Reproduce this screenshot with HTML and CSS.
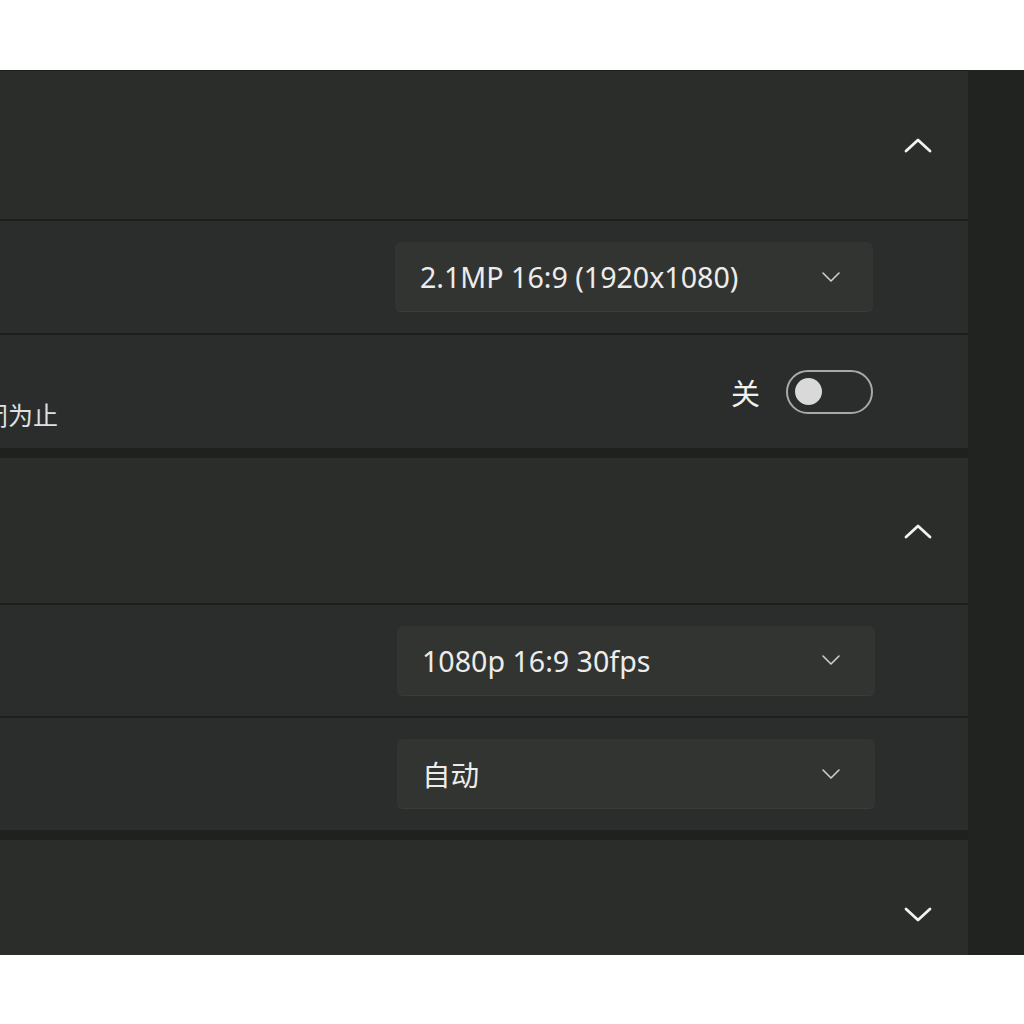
FILE: index.html
```html
<!DOCTYPE html>
<html lang="zh-CN">
<head>
<meta charset="utf-8">
<link rel="stylesheet" href="styles.css">
</head>
<body>
<div class="window">
  <div class="content">
    <section class="card card-first">
      <div class="header h1">
        <svg class="chev" width="28" height="16" viewBox="0 0 28 16"><path d="M2 14 L14 3 L26 14" fill="none" stroke="#f2f2f2" stroke-width="2.8" stroke-linecap="round" stroke-linejoin="round"/></svg>
      </div>
      <div class="row r1">
        <div class="select">
          <span class="val">2.1MP 16:9 (1920x1080)</span>
          <svg class="dd" width="20" height="12" viewBox="0 0 20 12"><path d="M2 2 L10 10 L18 2" fill="none" stroke="#cfcfcf" stroke-width="1.6" stroke-linecap="round" stroke-linejoin="round"/></svg>
        </div>
      </div>
      <div class="row r2">
        <div class="sub">闭为止</div>
        <div class="toggle-wrap">
          <span class="state">关</span>
          <span class="toggle"><span class="knob"></span></span>
        </div>
      </div>
    </section>
    <section class="card">
      <div class="header h2">
        <svg class="chev" width="28" height="16" viewBox="0 0 28 16"><path d="M2 14 L14 3 L26 14" fill="none" stroke="#f2f2f2" stroke-width="2.8" stroke-linecap="round" stroke-linejoin="round"/></svg>
      </div>
      <div class="row r3">
        <div class="select wide">
          <span class="val">1080p 16:9 30fps</span>
          <svg class="dd" width="20" height="12" viewBox="0 0 20 12"><path d="M2 2 L10 10 L18 2" fill="none" stroke="#cfcfcf" stroke-width="1.6" stroke-linecap="round" stroke-linejoin="round"/></svg>
        </div>
      </div>
      <div class="row r4">
        <div class="select wide">
          <span class="val">自动</span>
          <svg class="dd" width="20" height="12" viewBox="0 0 20 12"><path d="M2 2 L10 10 L18 2" fill="none" stroke="#cfcfcf" stroke-width="1.6" stroke-linecap="round" stroke-linejoin="round"/></svg>
        </div>
      </div>
    </section>
    <section class="card">
      <div class="header h3">
        <svg class="chev" width="28" height="16" viewBox="0 0 28 16"><path d="M2 2 L14 13 L26 2" fill="none" stroke="#f2f2f2" stroke-width="2.8" stroke-linecap="round" stroke-linejoin="round"/></svg>
      </div>
    </section>
  </div>
  <div class="strip"></div>
</div>
</body>
</html>
```

FILE: styles.css
```css
html, body {
  margin: 0;
  padding: 0;
  background: #ffffff;
}
body {
  font-family: "Noto Sans", "Noto Sans CJK SC", sans-serif;
  color: #ececec;
}
.window {
  margin-top: 70px;
  height: 885px;
  background: #1e211e;
  display: flex;
}
.content {
  width: 968px;
  display: flex;
  flex-direction: column;
  gap: 10px;
}
.strip {
  flex: 1;
  background: #202320;
}
.card {
  display: flex;
  flex-direction: column;
  gap: 2px;
  background: #1d1f1d;
}
.card-first {
  margin-top: 1px;
}
.header {
  box-sizing: border-box;
  background: #2b2d2a;
  display: flex;
  align-items: center;
  justify-content: flex-end;
  padding-right: 36px;
}
.h1 { height: 148px; }
.h2 { height: 145px; }
.h3 { height: 115px; padding-top: 34px; }
.row {
  background: #2a2d2c;
  display: flex;
  align-items: center;
  justify-content: flex-end;
  padding-right: 95px;
}
.r1 { height: 112px; }
.r2 { height: 113px; justify-content: space-between; }
.r3 { height: 111px; padding-right: 93px; }
.r4 { height: 112px; padding-right: 93px; }
.select {
  width: 478px;
  height: 70px;
  box-sizing: border-box;
  background: #323431;
  border-radius: 6px;
  border-bottom: 1px solid #3a3c39;
  display: flex;
  align-items: center;
  justify-content: space-between;
  padding: 0 32px 0 25px;
}
.select.wide {
  width: 478px;
  padding-right: 34px;
}
.val {
  font-size: 28.6px;
  color: #ececec;
}
.dd {
  display: block;
}
.sub {
  font-size: 25px;
  color: #e0e0e0;
  margin-left: -17px;
  padding-top: 44px;
}
.toggle-wrap {
  display: flex;
  align-items: center;
  gap: 26px;
}
.state {
  font-family: "Noto Sans CJK SC", sans-serif;
  font-size: 29px;
  color: #f0f0f0;
}
.toggle {
  width: 87px;
  height: 44px;
  box-sizing: border-box;
  border: 2px solid #a9aaa8;
  border-radius: 22px;
  display: flex;
  align-items: center;
  padding-left: 7px;
}
.knob {
  width: 27px;
  height: 27px;
  border-radius: 50%;
  background: #d9d9d9;
}
```
